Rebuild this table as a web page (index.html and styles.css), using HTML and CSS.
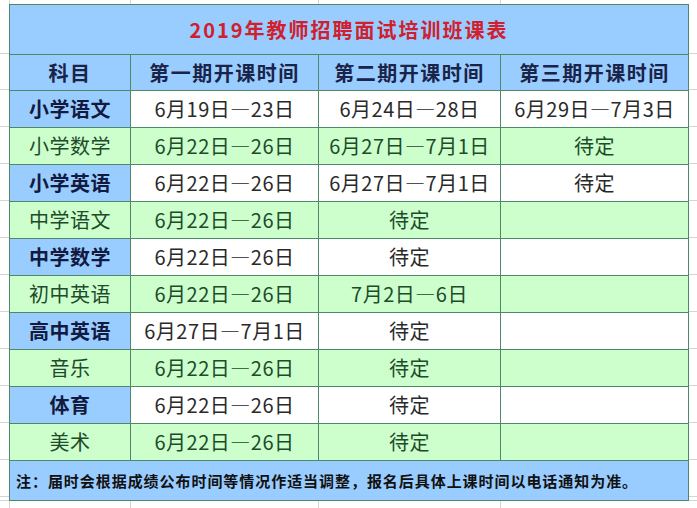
FILE: index.html
```html
<!DOCTYPE html>
<html lang="zh-CN">
<head>
<meta charset="utf-8">
<title>2019年教师招聘面试培训班课表</title>
<link rel="stylesheet" href="styles.css">
</head>
<body>
<div class="sheet">
<table class="schedule">
  <colgroup>
    <col class="c-subject">
    <col class="c-p1">
    <col class="c-p2">
    <col class="c-p3">
  </colgroup>
  <tr class="title-row"><td colspan="4" class="title">2019年教师招聘面试培训班课表</td></tr>
  <tr class="head-row">
    <td class="head">科目</td>
    <td class="head">第一期开课时间</td>
    <td class="head">第二期开课时间</td>
    <td class="head">第三期开课时间</td>
  </tr>
  <tr class="row odd"><td class="subj">小学语文</td><td>6月19日—23日</td><td>6月24日—28日</td><td>6月29日—7月3日</td></tr>
  <tr class="row even"><td class="subj">小学数学</td><td>6月22日—26日</td><td>6月27日—7月1日</td><td>待定</td></tr>
  <tr class="row odd"><td class="subj">小学英语</td><td>6月22日—26日</td><td>6月27日—7月1日</td><td>待定</td></tr>
  <tr class="row even"><td class="subj">中学语文</td><td>6月22日—26日</td><td>待定</td><td></td></tr>
  <tr class="row odd"><td class="subj">中学数学</td><td>6月22日—26日</td><td>待定</td><td></td></tr>
  <tr class="row even"><td class="subj">初中英语</td><td>6月22日—26日</td><td>7月2日—6日</td><td></td></tr>
  <tr class="row odd"><td class="subj">高中英语</td><td>6月27日—7月1日</td><td>待定</td><td></td></tr>
  <tr class="row even"><td class="subj">音乐</td><td>6月22日—26日</td><td>待定</td><td></td></tr>
  <tr class="row odd"><td class="subj">体育</td><td>6月22日—26日</td><td>待定</td><td></td></tr>
  <tr class="row even"><td class="subj">美术</td><td>6月22日—26日</td><td>待定</td><td></td></tr>
  <tr class="note-row"><td colspan="4" class="note">注：届时会根据成绩公布时间等情况作适当调整，报名后具体上课时间以电话通知为准。</td></tr>
</table>
</div>
</body>
</html>
```
FILE: styles.css
```css
html, body {
  margin: 0;
  padding: 0;
  background: #ffffff;
}
body {
  width: 697px;
  height: 508px;
  overflow: hidden;
}
.sheet {
  width: 697px;
  height: 508px;
  padding: 4px 0 0 9px;
  box-sizing: border-box;
  background-color: #ffffff;
  background-image:
    linear-gradient(to right, transparent 9px, #d4d4d4 9px, #d4d4d4 10px, transparent 10px),
    linear-gradient(to right, transparent 130px, #d4d4d4 130px, #d4d4d4 131px, transparent 131px),
    linear-gradient(to right, transparent 318px, #d4d4d4 318px, #d4d4d4 319px, transparent 319px),
    linear-gradient(to right, transparent 500px, #d4d4d4 500px, #d4d4d4 501px, transparent 501px),
    linear-gradient(to bottom, transparent 53px, #d4d4d4 53px, #d4d4d4 54px, transparent 54px),
    linear-gradient(to bottom, transparent 500px, #d4d4d4 500px, #d4d4d4 501px, transparent 501px),
    repeating-linear-gradient(to bottom, transparent 0, transparent 36px, #d4d4d4 36px, #d4d4d4 37px);
  background-position: 0 0, 0 0, 0 0, 0 0, 0 0, 0 0, 0 53px;
  background-size: 100% 100%, 100% 100%, 100% 100%, 100% 100%, 100% 100%, 100% 100%, 100% 447px;
  background-repeat: no-repeat;
}
.schedule {
  border-collapse: collapse;
  table-layout: fixed;
  width: 679px;
  font-family: "Noto Sans CJK SC", "Noto Sans", sans-serif;
  font-size: 20px;
  color: #222222;
}
.c-subject { width: 121px; }
.c-p1 { width: 188px; }
.c-p2 { width: 182px; }
.c-p3 { width: 188px; }
.schedule td {
  border: 1px solid #4f8868;
  padding: 0;
  text-align: center;
  vertical-align: middle;
  line-height: 1;
  white-space: nowrap;
  overflow: hidden;
}
.title-row { height: 50px; }
.title {
  background: #99ccff;
  color: #d0202e;
  font-weight: 700;
  font-size: 20px;
  letter-spacing: 2px;
}
.head-row { height: 36px; }
.head {
  background: #99ccff;
  color: #1a2348;
  font-weight: 700;
  font-size: 20px;
  letter-spacing: 1.5px;
}
.row { height: 37px; }
.row.odd td { background: #ffffff; color: #2a2a2a; }
.row.odd td.subj {
  background: #99ccff;
  color: #121a40;
  font-weight: 700;
}
.row.even td { background: #ccffcc; color: #214a2a; }
.row td { letter-spacing: 0.5px; }
.note-row { height: 40px; }
.note {
  background: #99ccff;
  color: #111111;
  font-weight: 700;
  font-size: 15px;
  letter-spacing: 0.95px;
  text-align: left !important;
  padding-left: 6px !important;
}
```
